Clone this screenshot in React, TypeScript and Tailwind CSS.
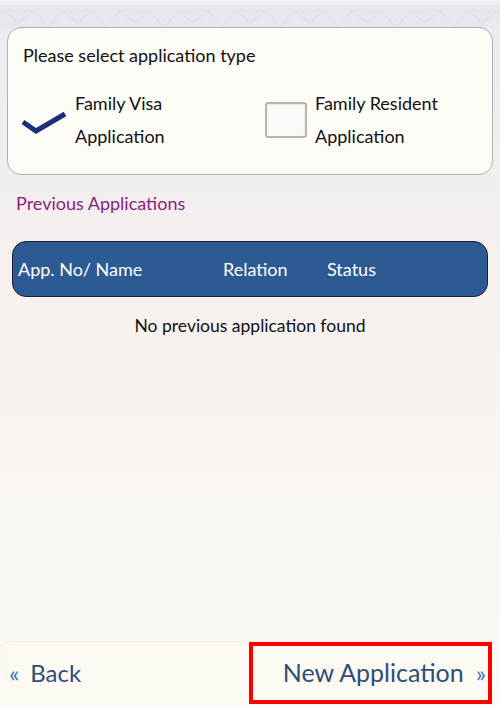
import React from 'react';

const font = { fontFamily: 'Lato, "Noto Sans", sans-serif' };

const Pattern: React.FC = () => (
  <svg width="500" height="22" viewBox="0 0 500 22" className="block">
    {Array.from({ length: 9 }).map((_, i) => {
      const x = i * 58 - 10;
      return (
        <path
          key={i}
          d={`M${x} 22 L${x + 14} 6 L${x + 44} 6 L${x + 58} 22 M${x + 14} 6 L${x + 29} 18 L${x + 44} 6`}
          fill="none"
          stroke="#dcdfe8"
          strokeWidth="1.2"
        />
      );
    })}
  </svg>
);

const App: React.FC = () => {
  return (
    <div
      className="w-[500px] h-[707px] flex flex-col bg-gradient-to-b from-[#eceaf0] via-[#f6f1ee] via-40% to-[#fdfaf4] overflow-hidden"
      style={font}
    >
      <div className="h-[5px] bg-[#f0eff3]" />
      <div className="h-[22px] bg-[#e6e8ef]">
        <Pattern />
      </div>

      <div className="mx-[7px] h-[148px] rounded-[14px] border border-[#b4afac] bg-[#fdfcf7] px-[15px] pt-[16px]">
        <p className="text-[18px] leading-[22px] text-[#111]">Please select application type</p>
        <div className="mt-[21px] flex">
          <div className="flex w-[242px] items-center">
            <svg width="46" height="26" viewBox="0 0 46 26" className="-ml-[2px] mt-[3px]">
              <path d="M2 13 L15 22 L44 5" fill="none" stroke="#1b2f78" strokeWidth="5" strokeLinejoin="miter" />
            </svg>
            <div className="ml-[8px] text-[18px] leading-[33px] text-[#111]">
              <div>Family Visa</div>
              <div>Application</div>
            </div>
          </div>
          <div className="flex items-center">
            <div className="h-[36px] w-[42px] rounded-[3px] border-2 border-[#b8b3ae] bg-[#fbfaf6] shadow-[inset_0_1px_2px_rgba(0,0,0,0.08)]" />
            <div className="ml-[8px] text-[18px] leading-[33px] text-[#111]">
              <div>Family Resident</div>
              <div>Application</div>
            </div>
          </div>
        </div>
      </div>

      <p className="mt-[17px] pl-[16px] text-[18px] leading-[22px] text-[#8a1d7b]">Previous Applications</p>

      <div className="mx-[12px] mt-[27px] flex h-[56px] items-center rounded-[14px] border border-[#1c2230] bg-[#2c5a92] px-[5px] text-[18px] text-white">
        <span className="w-[205px]">App. No/ Name</span>
        <span className="w-[104px]">Relation</span>
        <span>Status</span>
      </div>

      <p className="mt-[18px] text-center text-[17.5px] leading-[22px] text-[#111]">No previous application found</p>

      <div className="flex-1" />

      <div className="mx-[3px] mb-[4px] flex h-[62px] items-center justify-between rounded-t-[8px] border-t border-[#f1ece4] bg-[#fdfaf4]">
        <div className="flex items-center pl-[6px] text-[#2d4e78]">
          <span className="text-[24px] leading-none text-[#3872c0]">«</span>
          <span className="ml-[11px] text-[24px] leading-none">Back</span>
        </div>
        <div className="mr-[5px] flex h-[62px] w-[243px] items-center justify-end border-[4px] border-[#ff0000] pr-[2px] text-[#2d4e78]">
          <span className="text-[25px] leading-none">New Application</span>
          <span className="ml-[12px] text-[24px] leading-none text-[#3872c0]">»</span>
        </div>
      </div>
    </div>
  );
};

export default App;
